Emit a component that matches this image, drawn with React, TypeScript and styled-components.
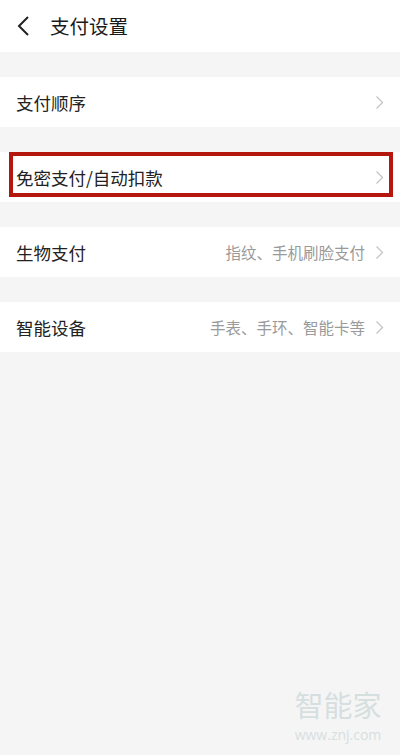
import React from 'react';
import styled, { createGlobalStyle } from 'styled-components';

const GlobalStyle = createGlobalStyle`
  html, body {
    margin: 0;
    padding: 0;
    background: #f5f5f5;
  }
  body {
    font-family: "Noto Sans CJK SC", "Noto Sans", sans-serif;
  }
`;

const Page = styled.div`
  width: 400px;
  height: 755px;
  background: #f5f5f5;
  position: relative;
  overflow: hidden;
`;

const Header = styled.header`
  height: 52px;
  background: #fff;
  display: flex;
  align-items: center;
  padding-left: 16px;
  gap: 18px;
`;

const Title = styled.h1`
  margin: 0;
  font-size: 19.5px;
  font-weight: 400;
  color: #1a1a1a;
  line-height: 1;
`;

const List = styled.div`
  display: flex;
  flex-direction: column;
  gap: 25px;
  padding-top: 25px;
`;

const Row = styled.div`
  position: relative;
  height: 50px;
  background: #fff;
  display: flex;
  align-items: center;
  padding: 0 16px;
`;

const Label = styled.span`
  flex: 1;
  font-size: 17.5px;
  color: #222;
`;

const Hint = styled.span`
  font-size: 15.5px;
  color: #9a9a9a;
  margin-right: 10px;
`;

const Highlight = styled.div`
  position: absolute;
  top: 0;
  bottom: 5px;
  left: 9px;
  right: 7px;
  border: 4.5px solid #b5170f;
  pointer-events: none;
`;

const Watermark = styled.div`
  position: absolute;
  right: 12px;
  top: 690px;
  width: 100px;
  display: flex;
  flex-direction: column;
  align-items: center;
  gap: 8px;
  color: #d6dfdf;
`;

const WmTitle = styled.div`
  font-family: "Noto Sans CJK SC", sans-serif;
  font-size: 29px;
  line-height: 29px;
  height: 29px;
`;

const WmUrl = styled.div`
  font-family: "Open Sans", sans-serif;
  font-size: 14px;
  line-height: 16px;
`;

const Back = () => (
  <svg width="16" height="22" viewBox="0 0 16 22">
    <path d="M12 2 L3 11 L12 20" fill="none" stroke="#222" strokeWidth="2" />
  </svg>
);

const Chevron = () => (
  <svg width="9" height="15" viewBox="0 0 9 15">
    <path d="M1.5 1.5 L7.5 7.5 L1.5 13.5" fill="none" stroke="#c4c4c4" strokeWidth="1.3" />
  </svg>
);

const rows = [
  { label: '支付顺序' },
  { label: '免密支付/自动扣款', marked: true },
  { label: '生物支付', hint: '指纹、手机刷脸支付' },
  { label: '智能设备', hint: '手表、手环、智能卡等' },
];

const App: React.FC = () => {
  return (
    <Page>
      <GlobalStyle />
      <Header>
        <Back />
        <Title>支付设置</Title>
      </Header>
      <List>
        {rows.map((r) => (
          <Row key={r.label}>
            <Label>{r.label}</Label>
            {r.hint && <Hint>{r.hint}</Hint>}
            <Chevron />
            {r.marked && <Highlight />}
          </Row>
        ))}
      </List>
      <Watermark>
        <WmTitle>智能家</WmTitle>
        <WmUrl>www.znj.com</WmUrl>
      </Watermark>
    </Page>
  );
};

export default App;
